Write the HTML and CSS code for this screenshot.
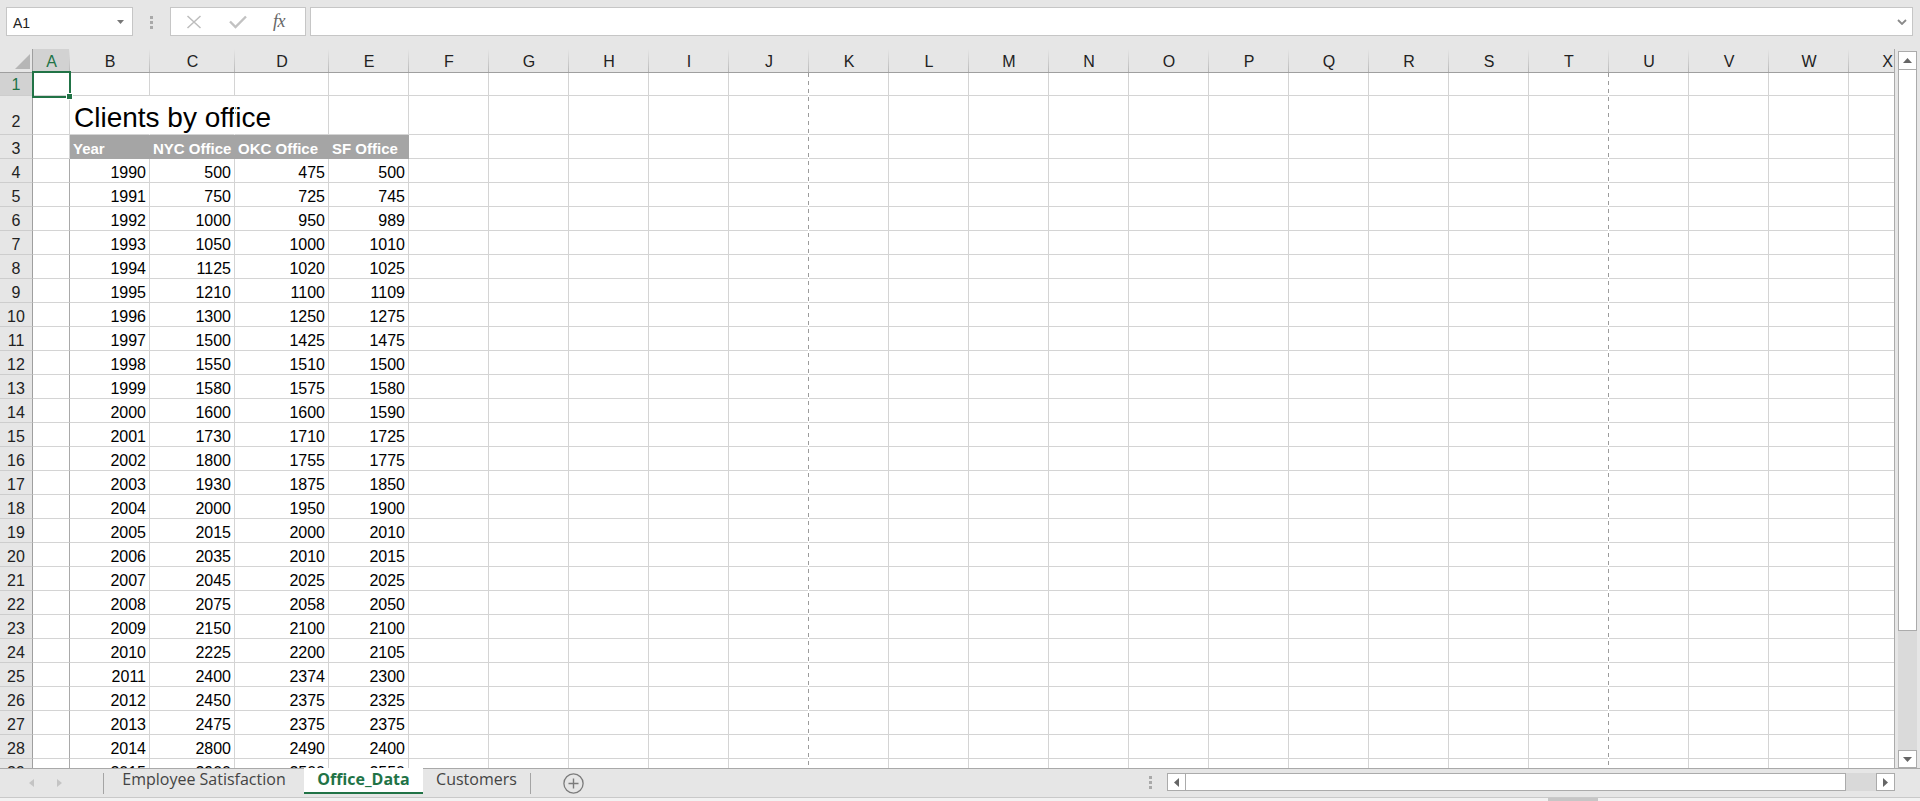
FILE: index.html
```html
<!DOCTYPE html>
<html>
<head>
<meta charset="utf-8">
<title>Office_Data</title>
<link rel="stylesheet" href="styles.css">
</head>
<body>
<div class="app">
  <div class="fbar">
    <div class="namebox"><span>A1</span><svg class="nbdrop" width="7" height="4" viewBox="0 0 7 4"><polygon points="0,0 7,0 3.5,4" fill="#777"/></svg></div>
    <div class="fdots"><i></i><i></i><i></i></div>
    <div class="fxbox">
      <svg class="ic-x" width="16" height="14" viewBox="0 0 16 14"><path d="M1.5 1 L14.5 13 M14.5 1 L1.5 13" stroke="#bdbdbd" stroke-width="1.5" fill="none"/></svg>
      <svg class="ic-ok" width="18" height="14" viewBox="0 0 18 14"><path d="M1 6.5 L6.5 12 L17 1.5" stroke="#c2c2c2" stroke-width="2.4" fill="none"/></svg>
      <span class="ic-fx">fx</span>
    </div>
    <div class="finput"><svg width="10" height="6" viewBox="0 0 10 6"><path d="M1 1 L5 5 L9 1" stroke="#8a8a8a" stroke-width="1.8" fill="none"/></svg></div>
  </div>

  <div class="workspace">
    <div class="sheet">
      <div class="chdr">
        <div class="ch corner"><svg width="32" height="23" viewBox="0 0 32 23"><polygon points="15,20 30,20 30,5" fill="#b6b6b6"/></svg></div>
        <div class="ch a on">A</div><div class="ch b">B</div><div class="ch cc">C</div><div class="ch d">D</div><div class="ch e">E</div>
        <div class="ch f">F</div><div class="ch f">G</div><div class="ch f">H</div><div class="ch f">I</div><div class="ch f">J</div><div class="ch f">K</div>
        <div class="ch f">L</div><div class="ch f">M</div><div class="ch f">N</div><div class="ch f">O</div><div class="ch f">P</div><div class="ch f">Q</div>
        <div class="ch f">R</div><div class="ch f">S</div><div class="ch f">T</div><div class="ch f">U</div><div class="ch f">V</div><div class="ch f">W</div>
        <div class="ch xl">X</div>
      </div>

      <div class="row r1"><div class="rh on">1</div><div class="c a"></div><div class="c b"></div><div class="c cc"></div><div class="c d"></div><div class="c e"></div><div class="rest"></div></div>
      <div class="row r2"><div class="rh">2</div><div class="c a"></div><div class="c b title nob">Clients by office</div><div class="c cc nob"></div><div class="c d"></div><div class="c e"></div><div class="rest"></div></div>
      <div class="row"><div class="rh">3</div><div class="c a"></div><div class="c b hd">Year</div><div class="c cc hd">NYC Office</div><div class="c d hd">OKC Office</div><div class="c e hd">SF Office</div><div class="rest"></div></div>
      <div class="row"><div class="rh">4</div><div class="c a tb"></div><div class="c b">1990</div><div class="c cc">500</div><div class="c d">475</div><div class="c e">500</div><div class="rest"></div></div>
      <div class="row"><div class="rh">5</div><div class="c a tb"></div><div class="c b">1991</div><div class="c cc">750</div><div class="c d">725</div><div class="c e">745</div><div class="rest"></div></div>
      <div class="row"><div class="rh">6</div><div class="c a tb"></div><div class="c b">1992</div><div class="c cc">1000</div><div class="c d">950</div><div class="c e">989</div><div class="rest"></div></div>
      <div class="row"><div class="rh">7</div><div class="c a tb"></div><div class="c b">1993</div><div class="c cc">1050</div><div class="c d">1000</div><div class="c e">1010</div><div class="rest"></div></div>
      <div class="row"><div class="rh">8</div><div class="c a tb"></div><div class="c b">1994</div><div class="c cc">1125</div><div class="c d">1020</div><div class="c e">1025</div><div class="rest"></div></div>
      <div class="row"><div class="rh">9</div><div class="c a tb"></div><div class="c b">1995</div><div class="c cc">1210</div><div class="c d">1100</div><div class="c e">1109</div><div class="rest"></div></div>
      <div class="row"><div class="rh">10</div><div class="c a tb"></div><div class="c b">1996</div><div class="c cc">1300</div><div class="c d">1250</div><div class="c e">1275</div><div class="rest"></div></div>
      <div class="row"><div class="rh">11</div><div class="c a tb"></div><div class="c b">1997</div><div class="c cc">1500</div><div class="c d">1425</div><div class="c e">1475</div><div class="rest"></div></div>
      <div class="row"><div class="rh">12</div><div class="c a tb"></div><div class="c b">1998</div><div class="c cc">1550</div><div class="c d">1510</div><div class="c e">1500</div><div class="rest"></div></div>
      <div class="row"><div class="rh">13</div><div class="c a tb"></div><div class="c b">1999</div><div class="c cc">1580</div><div class="c d">1575</div><div class="c e">1580</div><div class="rest"></div></div>
      <div class="row"><div class="rh">14</div><div class="c a tb"></div><div class="c b">2000</div><div class="c cc">1600</div><div class="c d">1600</div><div class="c e">1590</div><div class="rest"></div></div>
      <div class="row"><div class="rh">15</div><div class="c a tb"></div><div class="c b">2001</div><div class="c cc">1730</div><div class="c d">1710</div><div class="c e">1725</div><div class="rest"></div></div>
      <div class="row"><div class="rh">16</div><div class="c a tb"></div><div class="c b">2002</div><div class="c cc">1800</div><div class="c d">1755</div><div class="c e">1775</div><div class="rest"></div></div>
      <div class="row"><div class="rh">17</div><div class="c a tb"></div><div class="c b">2003</div><div class="c cc">1930</div><div class="c d">1875</div><div class="c e">1850</div><div class="rest"></div></div>
      <div class="row"><div class="rh">18</div><div class="c a tb"></div><div class="c b">2004</div><div class="c cc">2000</div><div class="c d">1950</div><div class="c e">1900</div><div class="rest"></div></div>
      <div class="row"><div class="rh">19</div><div class="c a tb"></div><div class="c b">2005</div><div class="c cc">2015</div><div class="c d">2000</div><div class="c e">2010</div><div class="rest"></div></div>
      <div class="row"><div class="rh">20</div><div class="c a tb"></div><div class="c b">2006</div><div class="c cc">2035</div><div class="c d">2010</div><div class="c e">2015</div><div class="rest"></div></div>
      <div class="row"><div class="rh">21</div><div class="c a tb"></div><div class="c b">2007</div><div class="c cc">2045</div><div class="c d">2025</div><div class="c e">2025</div><div class="rest"></div></div>
      <div class="row"><div class="rh">22</div><div class="c a tb"></div><div class="c b">2008</div><div class="c cc">2075</div><div class="c d">2058</div><div class="c e">2050</div><div class="rest"></div></div>
      <div class="row"><div class="rh">23</div><div class="c a tb"></div><div class="c b">2009</div><div class="c cc">2150</div><div class="c d">2100</div><div class="c e">2100</div><div class="rest"></div></div>
      <div class="row"><div class="rh">24</div><div class="c a tb"></div><div class="c b">2010</div><div class="c cc">2225</div><div class="c d">2200</div><div class="c e">2105</div><div class="rest"></div></div>
      <div class="row"><div class="rh">25</div><div class="c a tb"></div><div class="c b">2011</div><div class="c cc">2400</div><div class="c d">2374</div><div class="c e">2300</div><div class="rest"></div></div>
      <div class="row"><div class="rh">26</div><div class="c a tb"></div><div class="c b">2012</div><div class="c cc">2450</div><div class="c d">2375</div><div class="c e">2325</div><div class="rest"></div></div>
      <div class="row"><div class="rh">27</div><div class="c a tb"></div><div class="c b">2013</div><div class="c cc">2475</div><div class="c d">2375</div><div class="c e">2375</div><div class="rest"></div></div>
      <div class="row"><div class="rh">28</div><div class="c a tb"></div><div class="c b">2014</div><div class="c cc">2800</div><div class="c d">2490</div><div class="c e">2400</div><div class="rest"></div></div>
      <div class="row"><div class="rh">29</div><div class="c a tb"></div><div class="c b">2015</div><div class="c cc">2900</div><div class="c d">2500</div><div class="c e">2550</div><div class="rest"></div></div>

      <div class="pbreak pb-k"></div>
      <div class="pbreak pb-u"></div>
      <div class="selbox"></div>
      <div class="selhandle"></div>
    </div>

    <div class="vscroll">
      <div class="vbtn"><svg width="9" height="5" viewBox="0 0 9 5"><polygon points="0,5 9,5 4.5,0" fill="#666"/></svg></div>
      <div class="vthumb"></div>
      <div class="vtrack"></div>
      <div class="vbtn down"><svg width="9" height="5" viewBox="0 0 9 5"><polygon points="0,0 9,0 4.5,5" fill="#666"/></svg></div>
    </div>
  </div>

  <div class="tabbar">
    <div class="tnav">
      <svg width="5" height="8" viewBox="0 0 5 8"><polygon points="5,0 5,8 0,4" fill="#c4c4c4"/></svg>
      <svg width="5" height="8" viewBox="0 0 5 8"><polygon points="0,0 0,8 5,4" fill="#c4c4c4"/></svg>
    </div>
    <div class="tsep"></div>
    <div class="tab t-emp">Employee Satisfaction</div>
    <div class="tab t-act">Office_Data</div>
    <div class="tab t-cus">Customers</div>
    <div class="tsep"></div>
    <svg class="tplus" width="21" height="21" viewBox="0 0 21 21"><circle cx="10.5" cy="10.5" r="9.6" stroke="#7b7b7b" stroke-width="1.3" fill="none"/><path d="M10.5 5.5 V15.5 M5.5 10.5 H15.5" stroke="#7b7b7b" stroke-width="1.4"/></svg>
    <div class="hdots"><i></i><i></i><i></i></div>
    <div class="hscroll">
      <div class="hbtn"><svg width="5" height="9" viewBox="0 0 5 9"><polygon points="5,0 5,9 0,4.5" fill="#666"/></svg></div>
      <div class="hthumb"></div>
      <div class="htrack"></div>
      <div class="hbtn"><svg width="5" height="9" viewBox="0 0 5 9"><polygon points="0,0 0,9 5,4.5" fill="#666"/></svg></div>
    </div>
  </div>

  <div class="status"><div class="sbar"></div></div>
</div>
</body>
</html>
```

FILE: styles.css
```css
html, body {
  margin: 0;
  padding: 0;
}
body {
  width: 1920px;
  height: 801px;
  overflow: hidden;
  background: #e6e6e6;
  font-family: "Liberation Sans", Arial, sans-serif;
  color: #000;
}
.app {
  width: 1920px;
  height: 801px;
  display: flex;
  flex-direction: column;
}

/* ---------- formula bar ---------- */
.fbar {
  height: 49px;
  flex: none;
  display: flex;
  align-items: flex-start;
  padding-top: 7px;
  box-sizing: border-box;
}
.namebox {
  margin-left: 6px;
  width: 127px;
  height: 29px;
  box-sizing: border-box;
  background: #fff;
  border: 1px solid #c6c6c6;
  display: flex;
  align-items: center;
  padding: 2px 0 0 6px;
  font-size: 14px;
  color: #222;
}
.nbdrop {
  margin-left: auto;
  margin-right: 8px;
  margin-top: -1px;
}
.fdots {
  margin-left: 17px;
  width: 3px;
  padding-top: 9px;
  display: flex;
  flex-direction: column;
  gap: 2px;
}
.fdots i, .hdots i {
  display: block;
  width: 3px;
  height: 3px;
  background: #a9a9a9;
}
.fxbox {
  margin-left: 17px;
  width: 136px;
  height: 29px;
  box-sizing: border-box;
  background: #fff;
  border: 1px solid #c6c6c6;
  display: flex;
  align-items: center;
}
.ic-x { margin-left: 15px; }
.ic-ok { margin-left: 27px; }
.ic-fx {
  margin-left: 26px;
  font-family: "Liberation Serif", "Times New Roman", serif;
  font-style: italic;
  font-size: 18px;
  color: #666;
  letter-spacing: -0.5px;
}
.finput {
  margin-left: 4px;
  width: 1603px;
  height: 29px;
  box-sizing: border-box;
  background: #fff;
  border: 1px solid #c6c6c6;
  display: flex;
  align-items: center;
  justify-content: flex-end;
  padding-right: 5px;
}

/* ---------- workspace ---------- */
.workspace {
  height: 719px;
  flex: none;
  display: flex;
}
.sheet {
  width: 1894px;
  height: 719px;
  border-right: 1px solid #ababab;
  background: #fff;
  overflow: hidden;
  position: relative;
  flex: none;
}

/* column widths (header cells and body cells) */
.a { width: 37px; }
.b { width: 80px; }
.cc { width: 85px; }
.d { width: 94px; }
.e { width: 80px; }
.f { width: 80px; }

.chdr {
  display: flex;
  height: 24px;
  box-sizing: border-box;
  background: #e6e6e6;
  border-bottom: 1px solid #9f9f9f;
}
.ch {
  flex: none;
  height: 23px;
  box-sizing: border-box;
  padding-top: 2px;
  line-height: 21px;
  text-align: center;
  font-size: 16px;
  color: #222;
  background-image: linear-gradient(#e6e6e6, #b9b9b9);
  background-repeat: no-repeat;
  background-size: 1px 100%;
  background-position: right top;
}
.ch.corner {
  width: 33px;
  padding: 0;
  line-height: 0;
  background: #e6e6e6;
  border-right: 1px solid #9f9f9f;
}
.ch.on {
  background-color: #d2d2d2;
  color: #217346;
}
.ch.xl {
  flex: 1;
  text-align: right;
  padding-right: 1px;
  background-image: none;
}

.row {
  display: flex;
  height: 24px;
}
.row.r1 { height: 23px; }
.row.r2 { height: 39px; }

.rh {
  flex: none;
  width: 33px;
  box-sizing: border-box;
  background: #e6e6e6;
  border-right: 1px solid #9f9f9f;
  border-bottom: 1px solid #cdcdcd;
  text-align: center;
  font-size: 16px;
  line-height: 21px;
  padding-top: 3px;
  color: #222;
}
.r1 .rh { padding-top: 1px; }
.r2 .rh { padding-top: 15px; }
.rh.on {
  background: #d2d2d2;
  color: #217346;
}

.c {
  flex: none;
  box-sizing: border-box;
  border-right: 1px solid #d4d4d4;
  border-bottom: 1px solid #d4d4d4;
  font-size: 16px;
  line-height: 21px;
  padding: 3px 3px 0 3px;
  text-align: right;
  white-space: nowrap;
}
.c.tb { border-right-color: #a9a9a9; }
.c.nob { border-right-color: #fff; }
.c.title {
  text-align: left;
  font-size: 28px;
  line-height: 30px;
  padding: 7px 0 0 4px;
  overflow: visible;
}
.c.hd {
  background: #a5a5a5;
  border-color: #a5a5a5;
  color: #fff;
  font-weight: bold;
  font-size: 15px;
  text-align: left;
  padding-top: 3px;
}
.rest {
  flex: 1;
  box-sizing: border-box;
  border-bottom: 1px solid #d4d4d4;
  background-image: repeating-linear-gradient(to right, transparent 0, transparent 79px, #d4d4d4 79px, #d4d4d4 80px);
}

.pbreak {
  position: absolute;
  top: 24px;
  bottom: 0;
  width: 1px;
  background-image: repeating-linear-gradient(#9c9c9c 0, #9c9c9c 4px, #fff 4px, #fff 8px);
}
.pb-k { left: 808px; }
.pb-u { left: 1608px; }

.selbox {
  position: absolute;
  left: 32px;
  top: 22px;
  width: 39px;
  height: 27px;
  box-sizing: border-box;
  border: 2px solid #217346;
}
.selhandle {
  position: absolute;
  left: 66px;
  top: 44px;
  width: 7px;
  height: 7px;
  box-sizing: border-box;
  background: #217346;
  border: 1px solid #fff;
}

/* ---------- vertical scrollbar ---------- */
.vscroll {
  margin-left: 3px;
  margin-top: 2px;
  width: 19px;
  height: 717px;
  flex: none;
  display: flex;
  flex-direction: column;
}
.vbtn {
  height: 19px;
  flex: none;
  box-sizing: border-box;
  background: #fff;
  border: 1px solid #ababab;
  display: flex;
  align-items: center;
  justify-content: center;
}
.vbtn.down { height: 18px; }
.vthumb {
  height: 562px;
  flex: none;
  margin-top: -1px;
  box-sizing: border-box;
  background: #fff;
  border: 1px solid #ababab;
}
.vtrack {
  flex: 1;
  background: #dadada;
}

/* ---------- tab bar ---------- */
.tabbar {
  height: 29px;
  flex: none;
  box-sizing: border-box;
  border-top: 1px solid #a9a9a9;
  display: flex;
  align-items: flex-start;
  font-family: "Open Sans", "Noto Sans", sans-serif;
  font-size: 16px;
  color: #444;
}
.tnav {
  width: 103px;
  height: 28px;
  display: flex;
  align-items: center;
  gap: 23px;
  padding-left: 29px;
  box-sizing: border-box;
}
.tsep {
  width: 1px;
  height: 21px;
  margin-top: 4px;
  background: #a4a4a4;
}
.tab {
  height: 24px;
  box-sizing: border-box;
  line-height: 20px;
  text-align: center;
  white-space: nowrap;
}
.t-emp { width: 200px; }
.t-cus { width: 107px; }
.t-act {
  width: 119px;
  height: 26px;
  margin-top: -1px;
  padding-top: 1px;
  background: #fff;
  border-bottom: 2px solid #217346;
  color: #217346;
  font-weight: bold;
}
.tplus {
  margin-left: 32px;
  margin-top: 4px;
}
.hdots {
  margin-left: auto;
  margin-top: 7px;
  display: flex;
  flex-direction: column;
  gap: 2px;
}
.hscroll {
  margin-left: 15px;
  margin-right: 25px;
  margin-top: 4px;
  width: 728px;
  height: 18px;
  display: flex;
}
.hbtn {
  width: 19px;
  flex: none;
  box-sizing: border-box;
  background: #fff;
  border: 1px solid #ababab;
  display: flex;
  align-items: center;
  justify-content: center;
}
.hthumb {
  width: 661px;
  flex: none;
  margin-left: -1px;
  box-sizing: border-box;
  background: #fff;
  border: 1px solid #ababab;
}
.htrack {
  flex: 1;
  background: #d9d9d9;
}

/* ---------- status strip ---------- */
.status {
  height: 4px;
  flex: none;
  box-sizing: border-box;
  border-top: 1px solid #c9c9c9;
  background: #f2f2f2;
}
.sbar {
  margin-left: 1548px;
  width: 50px;
  height: 3px;
  background: #c6c6c6;
}
```
